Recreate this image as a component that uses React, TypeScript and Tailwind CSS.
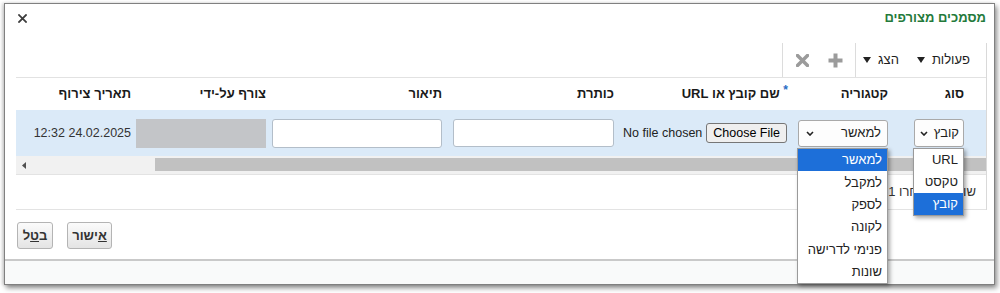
import React from "react";

const Caret = ({ className = "" }: { className?: string }) => (
  <svg width="8" height="6" viewBox="0 0 8 6" className={className}>
    <polygon points="0,0 8,0 4,6" fill="#222" />
  </svg>
);

const Chevron = () => (
  <svg width="8" height="5" viewBox="0 0 8 5">
    <polyline points="1,1 4,4 7,1" fill="none" stroke="#222" strokeWidth="1.6" />
  </svg>
);

const PlusIcon = () => (
  <svg width="15" height="15" viewBox="0 0 15 15">
    <path d="M7.5 0.5v14M0.5 7.5h14" stroke="#9b9b9b" strokeWidth="4" />
  </svg>
);

const XIcon = ({ size = 13, color = "#9b9b9b", w = 3.5 }: { size?: number; color?: string; w?: number }) => (
  <svg width={size} height={size} viewBox="0 0 13 13">
    <path d="M1.5 1.5l10 10M11.5 1.5l-10 10" stroke={color} strokeWidth={w} strokeLinecap="square" />
  </svg>
);

// column widths, right to left
const cols = ["w-[76px]", "w-[100px]", "w-[174px]", "w-[172px]", "w-[176px]", "w-[135px]", "w-[114px]"];

const headers = [
  <span>סוג</span>,
  <span>קטגוריה</span>,
  <span>
    <span className="text-[#2b6cc4] align-top text-[12px] leading-none">*</span> שם קובץ או URL
  </span>,
  <span>כותרת</span>,
  <span>תיאור</span>,
  <span className="pl-[6px]">צורף על-ידי</span>,
  <span>תאריך צירוף</span>,
];

export default function App() {
  const rowCells = [
    <div className="w-[50px] h-[28px] border border-[#a9a9a9] rounded-[3px] bg-[#fdfdfd] flex items-center justify-between pr-[4px] pl-[5px]">
      <span>קובץ</span>
      <Chevron />
    </div>,
    <div className="w-[90px] h-[27px] border border-[#a9a9a9] rounded-[3px] bg-[#fdfdfd] flex items-center justify-between pr-[6px] pl-[7px]">
      <span>למאשר</span>
      <Chevron />
    </div>,
    <div className="flex items-center gap-[4px] mr-[1px]">
      <button className="h-[20px] px-[6px] border border-[#767676] rounded-[3px] bg-[#efefef] text-black text-[12.5px]">
        Choose File
      </button>
      <span className="text-[#222] text-[12.5px]" dir="ltr">No file chosen</span>
    </div>,
    <div className="w-[161px] h-[28px] border border-[#b3bec9] rounded-[3px] bg-white" />,
    <div className="w-[170px] h-[29px] border border-[#b3bec9] rounded-[3px] bg-white" />,
    <div className="w-[130px] h-[29px] bg-[#c3c5c8]" />,
    <span dir="ltr" className="text-[#333] text-[12.5px]">12:32 24.02.2025</span>,
  ];

  return (
    <div className="relative w-[1000px] h-[293px] bg-white pt-[3px] pl-[4px] font-['Liberation_Sans',Arial,sans-serif] text-[13px] text-[#1e1e1e] overflow-hidden">
      <div className="w-[991px] h-[282px] border border-[#808080] bg-white flex flex-col shadow-[2px_3px_5px_rgba(0,0,0,0.45),-2px_0_3px_rgba(0,0,0,0.15)]">
        {/* header */}
        <div className="h-[28px] shrink-0 flex items-center justify-between pl-[13px] pr-[8px]">
          <XIcon size={9} color="#3c3c3c" w={2.6} />
          <span className="text-[13px] font-bold text-[#247a3b]">מסמכים מצורפים</span>
        </div>

        {/* panel */}
        <div className="mt-[11px] ml-[11px] w-[971px] border-r border-[#d9d9d9] shrink-0">
          {/* toolbar */}
          <div dir="rtl" className="h-[35px] flex border-b border-[#e2e2e2]">
            <div className="w-[131px] flex items-center pr-[16px] border-l border-[#dcdcdc]">
              <span>פעולות</span>
              <Caret className="mr-[7px]" />
              <span className="mr-[18px]">הצג</span>
              <Caret className="mr-[7px]" />
            </div>
            <div className="w-[73px] flex items-center pr-[12px] gap-[19px] border-l border-[#dcdcdc]">
              <PlusIcon />
              <XIcon />
            </div>
          </div>

          {/* table header */}
          <div dir="rtl" className="h-[32px] flex items-center pr-[22px] font-bold text-[#1a1a1a]">
            {headers.map((h, i) => (
              <div key={i} className={`${cols[i]} shrink-0 flex`}>
                {h}
              </div>
            ))}
          </div>

          {/* data row */}
          <div dir="rtl" className="h-[46px] flex items-center pr-[22px] bg-[#dbeaf8]">
            {rowCells.map((c, i) => (
              <div key={i} className={`${cols[i]} shrink-0 flex items-center`}>
                {c}
              </div>
            ))}
          </div>

          {/* horizontal scrollbar */}
          <div className="h-[19px] flex items-start bg-[#f1f1f1] border-b border-[#e3e3e3]">
            <div className="w-[139px] h-[18px] flex items-center pl-[6px]">
              <svg width="4" height="7" viewBox="0 0 4 7">
                <polygon points="4,0 4,7 0,3.5" fill="#505050" />
              </svg>
            </div>
            <div className="flex-1 h-[13px] mt-[2px] bg-[#c1c1c1]" />
          </div>

          {/* footer: mostly covered by the open lists */}
          <div dir="rtl" className="h-[35px] pr-[10px] pt-[7px] border-b border-[#e3e3e3] text-[#333]">
            שורות שנבחרו 1
          </div>
        </div>

        {/* buttons */}
        <div className="h-[49px] shrink-0 flex items-start gap-[14px] pl-[12px] pt-[12px]">
          <button className="h-[27px] w-[36px] border border-[#b4b4b4] rounded-[3px] bg-gradient-to-b from-[#fbfbfb] to-[#e4e4e4] font-bold text-[#333]">
            ב<span className="underline">ט</span>ל
          </button>
          <button className="h-[27px] w-[45px] border border-[#b4b4b4] rounded-[3px] bg-gradient-to-b from-[#fbfbfb] to-[#e4e4e4] font-bold text-[#333]">
            <span className="underline">א</span>ישור
          </button>
        </div>
        <div className="h-[2px] shrink-0 bg-[#c9c9c9]" />
        <div className="flex-1 bg-[#f9fafa]" />
      </div>

      {/* open list: סוג */}
      <div dir="rtl" className="absolute left-[913px] top-[148px] w-[51px] bg-white border border-[#9a9a9a] shadow-[2px_2px_4px_rgba(0,0,0,0.35)]">
        {["URL", "טקסט", "קובץ"].map((t, i) => (
          <div key={t} className={`h-[22px] flex items-center pr-[5px] ${i === 2 ? "bg-[#1d6fd9] text-white" : "text-[#222]"}`}>
            {t}
          </div>
        ))}
      </div>

      {/* open list: קטגוריה */}
      <div dir="rtl" className="absolute left-[797px] top-[148px] w-[91px] bg-white border border-[#9a9a9a] shadow-[2px_2px_4px_rgba(0,0,0,0.35)]">
        {["למאשר", "למקבל", "לספק", "לקונה", "פנימי לדרישה", "שונות"].map((t, i) => (
          <div key={t} className={`h-[22.3px] flex items-center pr-[5px] ${i === 0 ? "bg-[#1d6fd9] text-white" : "text-[#222]"}`}>
            {t}
          </div>
        ))}
      </div>
    </div>
  );
}
